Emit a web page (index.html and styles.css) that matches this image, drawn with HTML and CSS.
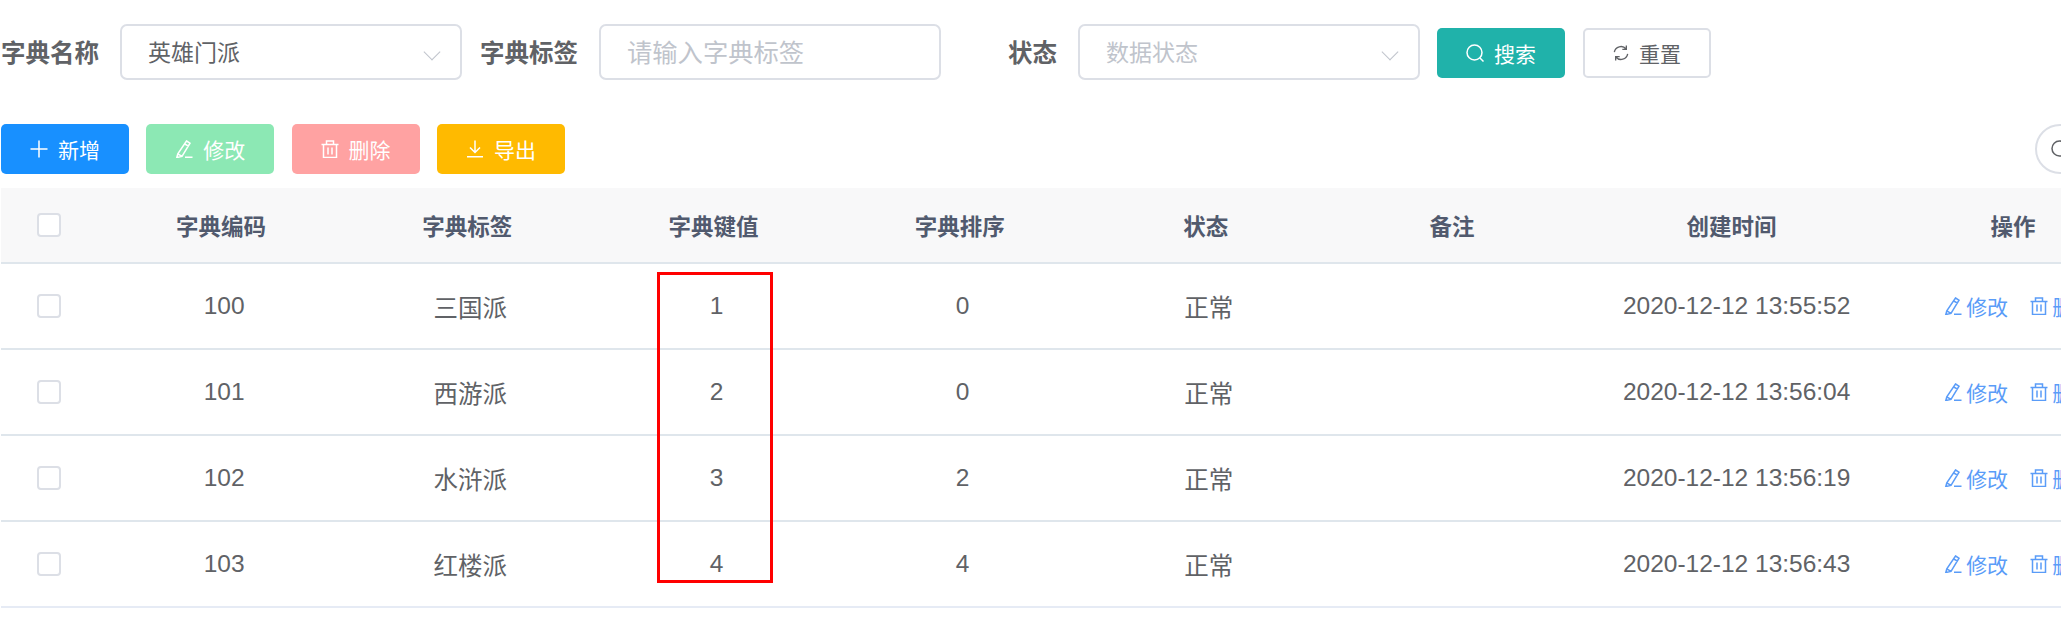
FILE: index.html
```html
<!DOCTYPE html>
<html lang="zh-CN">
<head>
    <meta charset="UTF-8">
    <title>字典数据</title>
    <link rel="stylesheet" href="styles.css">
</head>
<body>
    <svg class="icon-defs" xmlns="http://www.w3.org/2000/svg">
        <symbol id="i-plus" viewBox="0 0 18 18"><path d="M9 .5v17M.5 9h17"/></symbol>
        <symbol id="i-edit" viewBox="0 0 18 18"><path d="M11.500 1l3.500 2.200L7 16.400l-5.200 1.100 1-3.700zM2.800 13.800L7 16.400M9.800 4l3.700 2.200M10 17.300h7.500"/></symbol>
        <symbol id="i-trash" viewBox="0 0 18 18"><path d="M.5 4.500h17M2.500 4.500v13h13v-13M5.500 4.500V1h7v3.500M7 7.500v7M11 7.500v7"/></symbol>
        <symbol id="i-down" viewBox="0 0 18 18"><path d="M9 .5v12M4 7.500l5 5 5-5M1 16.800h16"/></symbol>
        <symbol id="i-search" viewBox="0 0 18 18"><circle cx="8.500" cy="8.500" r="7.500"/><path d="M14 14l3.500 3.500"/></symbol>
        <symbol id="i-refresh" viewBox="0 0 18 18"><path d="M1.500 8a7.500 7.500 0 0 1 13.200-3.500M16.500 10a7.500 7.500 0 0 1-13.200 3.500M15 .5v4.500h-4.500M3 17.500V13h4.500"/></symbol>
    </svg>

    <div class="page">
        <form class="search-form">
            <label class="form-label">字典名称</label>
            <div class="field field-select">英雄门派<span class="chevron"></span></div>
            <label class="form-label">字典标签</label>
            <div class="field field-input placeholder">请输入字典标签</div>
            <label class="form-label">状态</label>
            <div class="field field-select placeholder">数据状态<span class="chevron"></span></div>
            <button type="button" class="btn btn-search"><svg class="icon"><use href="#i-search"/></svg>搜索</button>
            <button type="button" class="btn btn-reset"><svg class="icon"><use href="#i-refresh"/></svg>重置</button>
        </form>

        <div class="toolbar">
            <button type="button" class="btn btn-add"><svg class="icon"><use href="#i-plus"/></svg>新增</button>
            <button type="button" class="btn btn-edit"><svg class="icon"><use href="#i-edit"/></svg>修改</button>
            <button type="button" class="btn btn-delete"><svg class="icon"><use href="#i-trash"/></svg>删除</button>
            <button type="button" class="btn btn-export"><svg class="icon"><use href="#i-down"/></svg>导出</button>
            <button type="button" class="btn-circle"><svg class="icon"><use href="#i-search"/></svg></button>
        </div>

        <table class="data-table">
            <colgroup>
                <col class="col-check">
                <col class="col-std"><col class="col-std"><col class="col-std"><col class="col-std"><col class="col-std"><col class="col-std">
                <col class="col-time">
                <col class="col-ops">
            </colgroup>
            <thead>
                <tr>
                    <th><span class="checkbox"></span></th>
                    <th>字典编码</th>
                    <th>字典标签</th>
                    <th>字典键值</th>
                    <th>字典排序</th>
                    <th>状态</th>
                    <th>备注</th>
                    <th>创建时间</th>
                    <th>操作</th>
                </tr>
            </thead>
            <tbody>
                <tr>
                    <td class="cell-check"><span class="checkbox"></span></td>
                    <td>100</td><td>三国派</td><td>1</td><td>0</td><td>正常</td><td></td>
                    <td class="cell-time">2020-12-12 13:55:52</td>
                    <td class="ops"><a><svg class="icon"><use href="#i-edit"/></svg>修改</a><a><svg class="icon"><use href="#i-trash"/></svg>删除</a></td>
                </tr>
                <tr>
                    <td class="cell-check"><span class="checkbox"></span></td>
                    <td>101</td><td>西游派</td><td>2</td><td>0</td><td>正常</td><td></td>
                    <td class="cell-time">2020-12-12 13:56:04</td>
                    <td class="ops"><a><svg class="icon"><use href="#i-edit"/></svg>修改</a><a><svg class="icon"><use href="#i-trash"/></svg>删除</a></td>
                </tr>
                <tr>
                    <td class="cell-check"><span class="checkbox"></span></td>
                    <td>102</td><td>水浒派</td><td>3</td><td>2</td><td>正常</td><td></td>
                    <td class="cell-time">2020-12-12 13:56:19</td>
                    <td class="ops"><a><svg class="icon"><use href="#i-edit"/></svg>修改</a><a><svg class="icon"><use href="#i-trash"/></svg>删除</a></td>
                </tr>
                <tr>
                    <td class="cell-check"><span class="checkbox"></span></td>
                    <td>103</td><td>红楼派</td><td>4</td><td>4</td><td>正常</td><td></td>
                    <td class="cell-time">2020-12-12 13:56:43</td>
                    <td class="ops"><a><svg class="icon"><use href="#i-edit"/></svg>修改</a><a><svg class="icon"><use href="#i-trash"/></svg>删除</a></td>
                </tr>
            </tbody>
        </table>

        <div class="highlight-box"></div>
    </div>
</body>
</html>
```

FILE: styles.css
```css
body {
    margin: 0;
    background: #fff;
    font-family: "Liberation Sans", "Noto Sans CJK SC", sans-serif;
    color: #606266;
}
.icon-defs {
    display: none;
}
.page {
    position: relative;
    height: 619px;
    overflow: hidden;
}
.icon {
    width: 18px;
    height: 18px;
    fill: none;
    stroke: currentColor;
    stroke-width: 1.5;
    flex: none;
}

/* search form */
.search-form {
    display: flex;
    align-items: flex-start;
    padding-top: 24px;
    height: 56px;
}
.form-label {
    width: 99px;
    margin-right: 21px;
    line-height: 59px;
    font-size: 24.5px;
    font-weight: bold;
    text-align: right;
    white-space: nowrap;
}
.field {
    position: relative;
    box-sizing: border-box;
    width: 342px;
    height: 56px;
    margin-right: 17px;
    padding-left: 26px;
    border: 2px solid #dcdfe6;
    border-radius: 7px;
    line-height: 55px;
}
.field-select {
    font-size: 23px;
}
.field-input {
    font-size: 25.3px;
}
.placeholder {
    color: #c0c4cc;
}
.chevron {
    position: absolute;
    right: 22px;
    top: 20px;
    width: 11px;
    height: 11px;
    border-right: 1.5px solid #c0c4cc;
    border-bottom: 1.5px solid #c0c4cc;
    transform: rotate(45deg);
}

/* buttons */
.btn {
    display: flex;
    align-items: center;
    justify-content: center;
    gap: 10px;
    box-sizing: border-box;
    width: 128px;
    height: 50px;
    padding: 0;
    border: none;
    border-radius: 5px;
    color: #fff;
    font-family: inherit;
    font-size: 21px;
}
.btn-search {
    margin-top: 4px;
    background: #20b2aa;
}
.btn-reset {
    margin: 4px 0 0 18px;
    background: #fff;
    border: 2px solid #dcdfe6;
    color: #606266;
}
.btn-reset .icon {
    width: 16px;
    height: 16px;
}
.toolbar {
    display: flex;
    align-items: center;
    gap: 17.3px;
    margin-top: 44px;
    padding-left: 1px;
}
.btn-add {
    background: #1890ff;
}
.btn-edit {
    background: #8ce8b4;
}
.btn-delete {
    background: #ffa2a2;
}
.btn-export {
    background: #ffba00;
}
.btn-circle {
    display: flex;
    align-items: center;
    justify-content: center;
    box-sizing: border-box;
    flex: none;
    width: 50px;
    height: 50px;
    margin-left: auto;
    margin-right: -24px;
    padding: 0;
    border: 2px solid #dcdfe6;
    border-radius: 50%;
    background: #fff;
    color: #606266;
}

/* table */
.data-table {
    width: 2137px;
    margin: 14px 0 0 1px;
    border-collapse: collapse;
    table-layout: fixed;
}
.col-check {
    width: 97px;
}
.col-std {
    width: 246.2px;
}
.col-time {
    width: 313px;
}
.col-ops {
    width: 249.8px;
}
.data-table th {
    height: 74px;
    padding: 0;
    border-bottom: 2px solid #dfe6ec;
    background: #f8f8f9;
    color: #515a6e;
    font-size: 22.5px;
    font-weight: bold;
}
.data-table td {
    height: 84px;
    padding: 0 0 0 6px;
    border-bottom: 2px solid #dfe6ec;
    font-size: 24.5px;
    text-align: center;
    white-space: nowrap;
}
.data-table tr:last-child td {
    border-bottom-color: #e6ebf5;
}
.data-table td.cell-check {
    padding-left: 0;
}
.data-table td.cell-time {
    padding-left: 10px;
}
.checkbox {
    display: block;
    box-sizing: border-box;
    width: 24px;
    height: 24px;
    margin-left: 36px;
    border: 2px solid #dcdfe6;
    border-radius: 4px;
    background: #fff;
}
.data-table td.ops {
    padding-left: 56px;
    text-align: left;
    overflow: hidden;
    color: #5a9cf8;
    font-size: 21px;
}
.ops a {
    display: inline-flex;
    align-items: center;
    gap: 4px;
    margin-right: 22px;
}

/* red marker drawn over the key column */
.highlight-box {
    position: absolute;
    left: 657px;
    top: 272px;
    box-sizing: border-box;
    width: 116px;
    height: 311px;
    border: 3px solid #f00;
}
```
